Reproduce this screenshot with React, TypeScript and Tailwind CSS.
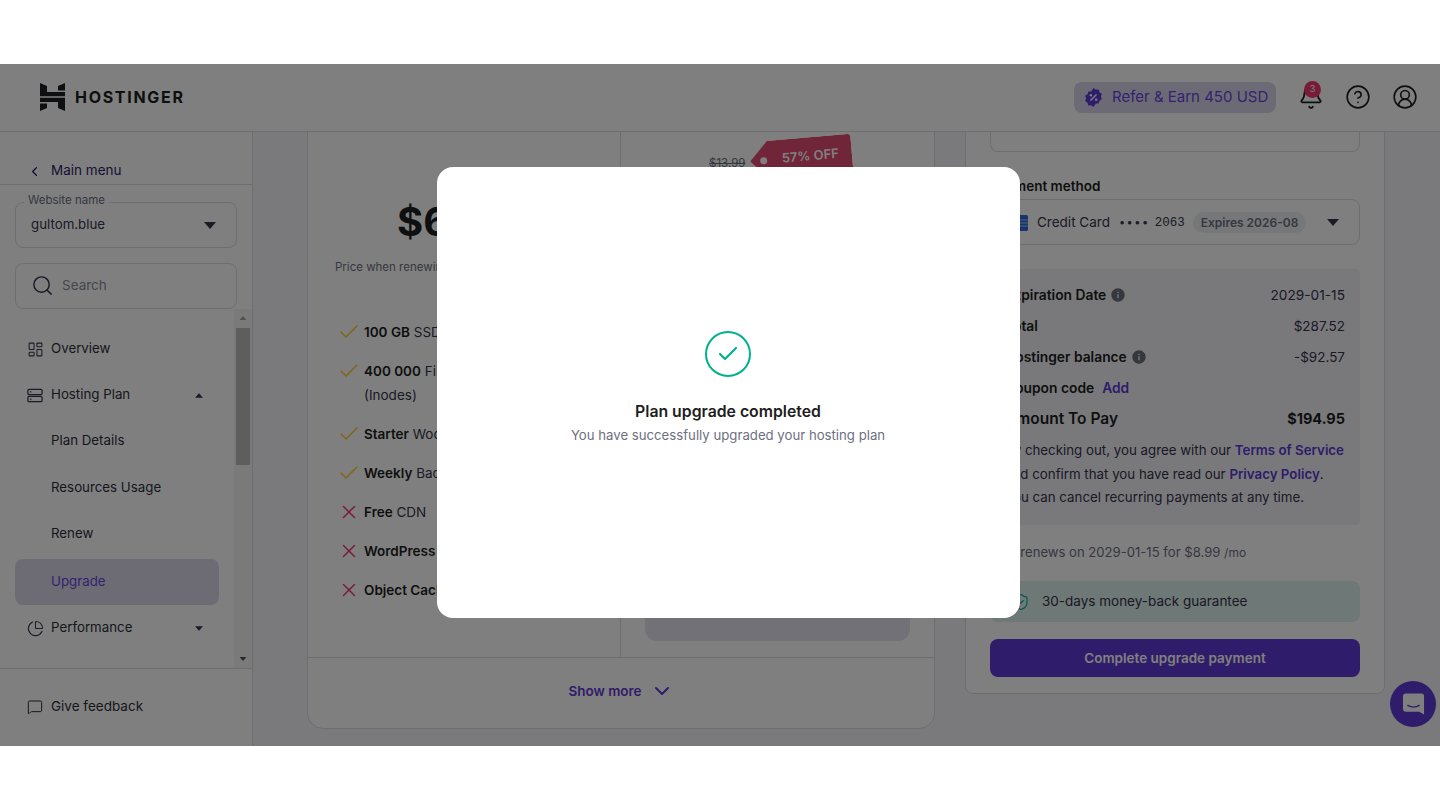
import React from 'react';
import {
  Bell,
  Check,
  ChevronDown,
  ChevronLeft,
  CircleHelp,
  CircleUserRound,
  ChartPie,
  LayoutDashboard,
  MessageSquare,
  Search,
  ShieldCheck,
  X,
} from 'lucide-react';
import { MdInfo } from 'react-icons/md';

const Caret: React.FC<{ up?: boolean; className?: string }> = ({ up, className }) => (
  <svg viewBox="0 0 12 7" className={className} fill="currentColor">
    <path d={up ? 'M6 0L12 7H0Z' : 'M0 0H12L6 7Z'} />
  </svg>
);

const ServerIcon: React.FC = () => (
  <svg viewBox="0 0 18 16" className="w-4 h-[15px]" fill="none" stroke="currentColor" strokeWidth="1.4">
    <rect x="1" y="1" width="16" height="6" rx="1.5" />
    <rect x="1" y="9" width="16" height="6" rx="1.5" />
    <path d="M3.5 4H5M3.5 12H5" />
  </svg>
);

const Logo: React.FC = () => (
  <svg viewBox="0 0 25 28" className="w-[25px] h-[28px]" fill="#1d1e20">
    <path d="M0 0L7 3V9H25V13.2H0Z" />
    <path d="M18 3L25 0V7.5H18Z" />
    <path d="M25 28L18 25V19H0V14.8H25Z" />
    <path d="M7 25L0 28V20.5H7Z" />
  </svg>
);

const PercentBadge: React.FC = () => (
  <svg viewBox="0 0 20 20" className="w-[19px] h-[19px]">
    <path
      fill="#5f38d4"
      d="M10 0l2.4 1.8 3-.2.9 2.9 2.5 1.7-1 2.8 1 2.8-2.5 1.7-.9 2.9-3-.2L10 20l-2.4-1.8-3 .2-.9-2.9-2.5-1.7 1-2.8-1-2.8 2.5-1.7.9-2.9 3 .2Z"
    />
    <path d="M6.800 13.200L13.200 6.800" stroke="#fff" strokeWidth="1.5" />
    <circle cx="7.2" cy="7.6" r="1.3" fill="#fff" />
    <circle cx="12.8" cy="12.4" r="1.3" fill="#fff" />
  </svg>
);

const CardIcon: React.FC = () => (
  <svg viewBox="0 0 12 16" className="w-[12px] h-[16px]">
    <rect width="12" height="16" rx="1.5" fill="#2f6bd8" />
    <path d="M2 5H12M2 8H12M2 11H12" stroke="#a9c4f2" strokeWidth="1" />
  </svg>
);

const navRows = [
  { label: 'Overview', icon: <LayoutDashboard className="w-[17px] h-[17px]" strokeWidth={1.5} />, cls: 'pt-[2px] text-[#2d2f3b]' },
  { label: 'Hosting Plan', icon: <ServerIcon />, caret: 'up', cls: 'pt-[2px] text-[#2d2f3b]' },
  { label: 'Plan Details', cls: 'pt-[2px] text-[#2d2f3b]' },
  { label: 'Resources Usage', cls: 'mt-px pt-[2px] text-[#2d2f3b]' },
  { label: 'Renew', cls: 'pt-[2px] text-[#2d2f3b]' },
  { label: 'Upgrade', cls: 'mt-[3px] bg-[#dbd9ea] text-[#6a45dc]' },
  { label: 'Performance', icon: <ChartPie className="w-[17px] h-[17px]" strokeWidth={1.5} />, caret: 'down', cls: 'text-[#2d2f3b]' },
];

const features = [
  { ok: true, bold: '100 GB', rest: ' SSD storage' },
  { ok: true, bold: '400 000', rest: ' Files and Directories', extra: '(Inodes)' },
  { ok: true, bold: 'Starter', rest: ' WooCommerce' },
  { ok: true, bold: 'Weekly', rest: ' Backups' },
  { ok: false, bold: 'Free', rest: ' CDN' },
  { ok: false, bold: 'WordPress', rest: ' Staging' },
  { ok: false, bold: 'Object Cache', rest: '' },
];

const App: React.FC = () => {
  return (
    <div className="w-[1440px] h-[810px] flex flex-col bg-white overflow-hidden font-['Inter',sans-serif] text-[#1d1e20]">
      <div className="h-16 shrink-0" />

      <div className="relative h-[682px] shrink-0 flex flex-col overflow-hidden">
        <header className="h-[68px] shrink-0 flex items-center bg-white border-b border-[#dadce0] pl-10 pr-[22px] pb-[2px]">
          <Logo />
          <span className="ml-[10px] text-[16px] font-bold tracking-[1.7px]">HOSTINGER</span>
          <div className="ml-auto flex items-center">
            <div className="w-[202px] h-[31px] mt-[2px] flex items-center gap-[9px] pl-[10px] rounded-lg bg-[#d9d7ea] text-[#6a45dc] text-[15px]">
              <PercentBadge />
              <span>Refer &amp; Earn 450 USD</span>
            </div>
            <div className="relative ml-[22px]">
              <Bell className="w-[26px] h-[26px]" strokeWidth={1.6} />
              <span className="absolute -top-[3px] left-[6px] w-[17px] h-[17px] rounded-full bg-[#f0376f] text-white text-[9px] flex items-center justify-center">3</span>
            </div>
            <CircleHelp className="w-[26px] h-[26px] ml-[21px]" strokeWidth={1.5} />
            <CircleUserRound className="w-[26px] h-[26px] ml-[21px]" strokeWidth={1.5} />
          </div>
        </header>

        <div className="flex-1 flex min-h-0">
          <aside className="w-[253px] shrink-0 flex flex-col bg-white border-r border-[#dadce0]">
            <div className="h-[53px] shrink-0 flex items-end pb-[4px] pl-[27px] border-b border-[#dadce0] text-[13.5px] text-[#2f1c6a]">
              <ChevronLeft className="w-[15px] h-[15px] mb-px" strokeWidth={2} />
              <span className="ml-[9px]">Main menu</span>
            </div>
            <div className="relative mx-[15px] mt-[17px] h-[46px] shrink-0 flex items-center justify-between pl-[15px] pr-[20px] border border-[#dadce0] rounded-lg text-[13.3px] text-[#36344d]">
              <span className="absolute -top-[11px] left-[8px] px-1 bg-white text-[11.5px] text-[#6d7081]">Website name</span>
              <span>gultom.blue</span>
              <Caret className="w-3 h-[7px] text-[#36344d]" />
            </div>
            <div className="mx-[15px] mt-[15px] h-[46px] shrink-0 flex items-center gap-2 pl-[15px] pb-px border border-[#dadce0] rounded-lg text-[13.5px] text-[#8b8d9c]">
              <Search className="w-[23px] h-[23px] text-[#36344d]" strokeWidth={1.5} />
              <span>Search</span>
            </div>

            <div className="flex-1 min-h-0 flex">
              <nav className="flex-1 pt-4 pl-[15px] pr-[15px]">
                {navRows.map((row) => (
                  <div key={row.label} className={`h-[46px] flex items-center rounded-lg text-[13.3px] relative ${row.cls}`}>
                    <span className="w-9 pl-3 flex justify-start text-[#36344d]">{row.icon}</span>
                    <span>{row.label}</span>
                    {row.caret && (
                      <Caret up={row.caret === 'up'} className="absolute left-[180px] w-[8px] h-[5px] text-[#36344d]" />
                    )}
                  </div>
                ))}
              </nav>
              <div className="w-[18px] shrink-0 flex flex-col items-center bg-[#f5f5f5] pt-[7px] pb-[7px] text-[#505050]">
                <Caret up className="w-2 h-1 text-[#a3a3a3]" />
                <div className="w-[14px] h-[137px] mt-[8px] bg-[#bdbdbd]" />
                <Caret className="w-2 h-1 mt-auto" />
              </div>
            </div>

            <div className="h-[78px] shrink-0 flex items-center gap-2 pl-[27px] pb-[2px] border-t border-[#dadce0] text-[13.5px] text-[#2d2f3b]">
              <MessageSquare className="w-[16px] h-[16px]" strokeWidth={1.5} />
              <span>Give feedback</span>
            </div>
          </aside>

          <main className="flex-1 min-w-0 flex items-end gap-[30px] pl-[54px] bg-[#f5f5fa] overflow-hidden">
            <section className="w-[628px] h-[620px] shrink-0 mb-[17px] flex flex-col bg-white border border-[#dadce0] rounded-2xl">
              <div className="flex-1 min-h-0 flex">
                <div className="w-[313px] shrink-0 flex flex-col border-r border-[#dadce0]">
                  <div className="mt-[88px] ml-[89px] text-[40px] leading-[48px] font-bold">$6.99</div>
                  <div className="mt-[11px] ml-[27px] text-[11.5px] leading-5 text-[#6d7081]">Price when renewing</div>
                  <ul className="mt-auto mb-[55px] ml-[29px] flex flex-col gap-[15px] text-[13.5px] text-[#36344d]">
                    {features.map((f) => (
                      <li key={f.bold} className="flex">
                        {f.ok ? (
                          <Check className="w-6 h-6 text-[#ffcd35] shrink-0" strokeWidth={1.6} />
                        ) : (
                          <X className="w-[22px] h-6 mx-px text-[#f0376f] shrink-0" strokeWidth={1.6} />
                        )}
                        <span className="ml-[3px] leading-6">
                          <b className="font-semibold text-[#1d1e20]">{f.bold}</b>
                          {f.rest}
                          {f.extra && <span className="block">{f.extra}</span>}
                        </span>
                      </li>
                    ))}
                  </ul>
                </div>
                <div className="relative flex-1 flex flex-col">
                  <div className="mt-[43px] ml-[88px] text-[11.5px] leading-5 text-[#6d7081] line-through">$13.99</div>
                  <div className="absolute top-[28px] left-[129px] w-[102px] h-[38px] -rotate-[5deg] rounded-r bg-[#e04a72] [clip-path:polygon(0_50%,18%_0,100%_0,100%_100%,18%_100%)] flex items-center justify-end pr-[13px] text-white text-[13px] font-semibold">
                    57% OFF
                    <span className="absolute left-[10px] top-[16px] w-[7px] h-[7px] rounded-full bg-white" />
                  </div>
                  <div className="mt-auto mb-4 mx-[24px] h-[60px] rounded-xl bg-[#e4e2ee]" />
                </div>
              </div>
              <div className="h-[71px] shrink-0 flex items-center justify-center gap-2 pb-1 border-t border-[#dadce0] text-[13.5px] font-semibold text-[#5f38d4]">
                <span>Show more</span>
                <ChevronDown className="w-6 h-6" strokeWidth={2} />
              </div>
            </section>

            <section className="w-[420px] h-[620px] shrink-0 mb-[52px] flex flex-col justify-end px-6 pb-4 bg-white border border-[#dadce0] rounded-lg">
              <div className="h-10 shrink-0 border border-t-0 border-[#dadce0] rounded-b-lg" />
              <div className="mt-6 h-5 text-[13.5px] leading-5 font-semibold">Payment method</div>
              <div className="mt-[3px] h-[46px] flex items-center pl-[25px] pt-px border border-[#dadce0] rounded-lg text-[13.5px] text-[#36344d]">
                <CardIcon />
                <span className="ml-[9px]">Credit Card</span>
                <span className="ml-[9px] text-[11px] tracking-[1.5px]">••••</span>
                <span className="ml-[5px] pt-px font-['Liberation_Mono',monospace] text-[12.5px]">2063</span>
                <span className="ml-[8px] px-2 h-[21px] flex items-center rounded-full bg-[#eceef1] text-[12px] font-semibold text-[#6d7081]">Expires 2026-08</span>
                <Caret className="w-3 h-[7px] ml-[21px]" />
              </div>

              <div className="mt-6 h-[256px] shrink-0 px-[15px] pt-4 rounded bg-[#f2f3f6] text-[13.8px]">
                <div className="flex flex-col gap-[11px]">
                  <div className="h-5 flex items-center justify-between">
                    <span className="flex items-center gap-[4px] font-semibold">Expiration Date <MdInfo className="w-[16px] h-[16px] text-[#6d7081]" /></span>
                    <span className="text-[13.7px] text-[#36344d]">2029-01-15</span>
                  </div>
                  <div className="h-5 flex items-center justify-between">
                    <span className="font-semibold">Total</span>
                    <span className="text-[13.5px] text-[#36344d]">$287.52</span>
                  </div>
                  <div className="h-5 flex items-center justify-between">
                    <span className="flex items-center gap-[4px] font-semibold">Hostinger balance <MdInfo className="w-[16px] h-[16px] text-[#6d7081]" /></span>
                    <span className="text-[13.5px] text-[#36344d]">-$92.57</span>
                  </div>
                  <div className="h-5 flex items-center gap-2">
                    <span className="font-semibold">Coupon code</span>
                    <span className="font-semibold text-[#5f38d4]">Add</span>
                  </div>
                  <div className="h-5 flex items-center justify-between font-semibold">
                    <span className="text-[15.5px]">Amount To Pay</span>
                    <span className="text-[14.5px] font-bold">$194.95</span>
                  </div>
                </div>
                <p className="mt-[10px] text-[13.3px] leading-[23.5px] text-[#36344d]">
                  By checking out, you agree with our <span className="font-semibold text-[#5f38d4]">Terms of Service</span>
                  <br />
                  and confirm that you have read our <span className="font-semibold text-[#5f38d4]">Privacy Policy</span>.
                  <br />
                  You can cancel recurring payments at any time.
                </p>
              </div>

              <div className="mt-[17px] h-5 text-[13.100px] leading-5 text-[#6d7081]">
                Plan renews on 2029-01-15 for $8.99 <span className="text-[12px]">/mo</span>
              </div>
              <div className="mt-[19px] h-[41px] shrink-0 flex items-center pl-[22px] gap-[12px] rounded-lg bg-[#dcf0ec] text-[13.5px] text-[#36344d]">
                <ShieldCheck className="w-[18px] h-[22px] text-[#00b090]" strokeWidth={1.5} />
                <span>30-days money-back guarantee</span>
              </div>
              <button className="mt-[17px] h-[38px] shrink-0 rounded-lg bg-[#5f38d4] text-white text-[13.5px] font-semibold">
                Complete upgrade payment
              </button>
            </section>
          </main>
        </div>

        <div className="absolute left-[1390px] top-[617px] w-[46px] h-[46px] rounded-full bg-[#5f38d4] flex items-center justify-center">
          <svg viewBox="0 0 24 24" className="w-[23px] h-[24px]">
            <path fill="#fff" d="M4 1h16a3 3 0 0 1 3 3v19l-5-3H4a3 3 0 0 1-3-3V4a3 3 0 0 1 3-3Z" />
            <path d="M6 13.500c3.500 2 8.500 2 12 0" fill="none" stroke="#5f38d4" strokeWidth="1.4" strokeLinecap="round" />
          </svg>
        </div>

        <div className="absolute inset-0 bg-black/50">
          <div className="ml-[437px] mt-[103px] w-[583px] h-[451px] pb-[9px] pr-px flex flex-col items-center justify-center bg-white rounded-2xl">
            <div className="w-[46px] h-[46px] rounded-full border-2 border-[#00b090] flex items-center justify-center">
              <Check className="w-6 h-6 text-[#00b090]" strokeWidth={2.2} />
            </div>
            <div className="mt-[25px] text-[15.8px] leading-5 font-semibold text-[#1d1e20]">Plan upgrade completed</div>
            <div className="mt-[3px] text-[13.2px] leading-5 text-[#6d7081]">You have successfully upgraded your hosting plan</div>
          </div>
        </div>
      </div>

      <div className="h-16 shrink-0" />
    </div>
  );
};

export default App;
